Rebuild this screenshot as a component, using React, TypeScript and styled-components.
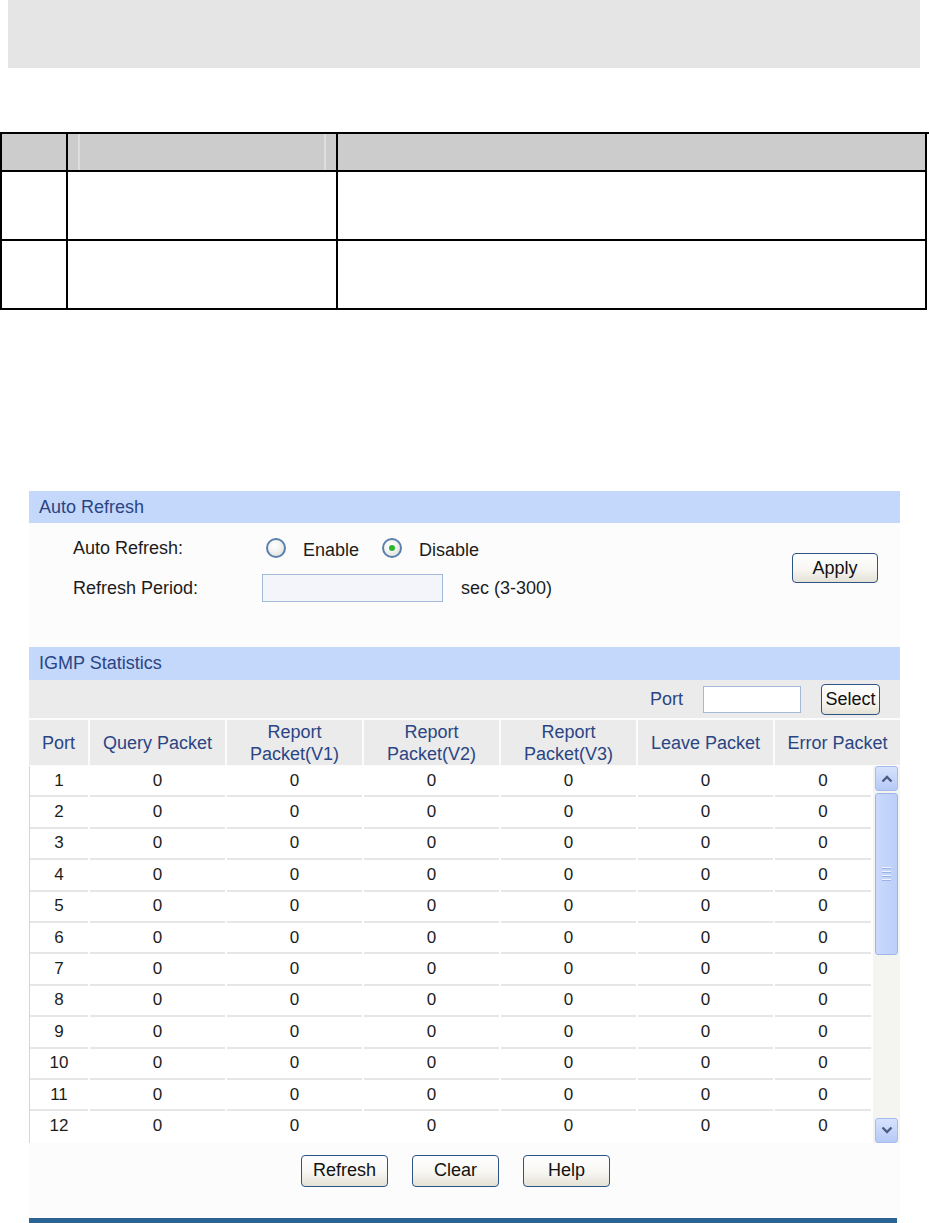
import styled, { createGlobalStyle } from "styled-components";

const GlobalStyle = createGlobalStyle`
  body {
    margin: 0;
    background: #ffffff;
    font-family: "Liberation Sans", Arial, sans-serif;
    overflow: hidden;
  }
`;

const Page = styled.div`
  width: 929px;
`;

const TopBox = styled.div`
  margin: 0 9px 0 8px;
  height: 68px;
  background: #e5e5e5;
`;

const DocGrid = styled.div`
  margin-top: 64px;
  display: grid;
  grid-template-columns: 66px 270px 589px;
  grid-template-rows: 38px 69px 69px;
  border-top: 2px solid #000;
  border-left: 2px solid #000;
`;

const DocCell = styled.div<{ $head?: boolean }>`
  border-right: 2px solid #000;
  border-bottom: 2px solid #000;
  background: ${(p) => (p.$head ? "#cccccc" : "#ffffff")};
  display: flex;
`;

const DocInner = styled.div`
  flex: 1;
  margin: 0 10px;
  border-left: 2px solid #dedede;
  border-right: 2px solid #dedede;
`;

const Panel = styled.div`
  margin: 181px 0 0 29px;
  width: 871px;
  background: #fcfcfc;
`;

const SectionHeader = styled.div<{ $h: number }>`
  height: ${(p) => p.$h}px;
  background: #c4d8fc;
  color: #2a4583;
  font-size: 18px;
  padding-left: 10px;
  display: flex;
  align-items: center;
`;

const RefreshBody = styled.div`
  height: 124px;
  display: flex;
  align-items: flex-start;
  justify-content: space-between;
  padding: 8px 22px 0 44px;
  box-sizing: border-box;
`;

const FormGrid = styled.div`
  display: grid;
  grid-template-columns: 189px auto;
  grid-auto-rows: 34px;
  row-gap: 6px;
  align-items: center;
  font-size: 18px;
  color: #1c1c1c;
`;

const FieldLine = styled.div`
  display: flex;
  align-items: center;
`;

const Radio = styled.span<{ $checked?: boolean }>`
  width: 20px;
  height: 20px;
  box-sizing: border-box;
  border-radius: 50%;
  border: 2px solid #5a80ad;
  background: radial-gradient(circle at 40% 35%, #ffffff 0%, #f2f2f0 45%, #d6d6d2 100%);
  display: flex;
  align-items: center;
  justify-content: center;
  margin: 0 17px 0 4px;

  &::after {
    content: "";
    display: ${(p) => (p.$checked ? "block" : "none")};
    width: 6px;
    height: 6px;
    border-radius: 50%;
    background: #29b52c;
  }
`;

const RadioText = styled.span`
  margin-right: 19px;
  padding-top: 4px;
`;

const TextBox = styled.div<{ $w: number; $h: number; $bg: string }>`
  width: ${(p) => p.$w}px;
  height: ${(p) => p.$h}px;
  box-sizing: border-box;
  border: 1.5px solid #a3b9d8;
  background: ${(p) => p.$bg};
`;

const Hint = styled.span`
  margin-left: 18px;
`;

const Btn = styled.button<{ $w: number; $h: number }>`
  width: ${(p) => p.$w}px;
  height: ${(p) => p.$h}px;
  border: 1.5px solid #2f5384;
  border-radius: 4px;
  background: linear-gradient(#ffffff 0%, #f7f6f2 55%, #e4e1d6 100%);
  font-family: "Liberation Sans", Arial, sans-serif;
  font-size: 18px;
  color: #111;
  padding: 0;
  cursor: pointer;
`;

const ApplyWrap = styled.div`
  padding-top: 22px;
`;

const Toolbar = styled.div`
  height: 38px;
  background: #ebebeb;
  display: flex;
  align-items: center;
  justify-content: flex-end;
  padding-right: 20px;
  gap: 20px;
  font-size: 18px;
  color: #2a4583;
`;

const HeadGrid = styled.div`
  margin-top: 2px;
  height: 45px;
  display: grid;
  grid-template-columns: 59px 135px 135px 135px 135px 135px 125px;
  column-gap: 2px;
`;

const HeadCell = styled.div`
  background: #ebebeb;
  color: #2a4583;
  font-size: 18px;
  line-height: 22px;
  white-space: pre-line;
  text-align: center;
  display: flex;
  align-items: center;
  justify-content: center;
`;

const DataArea = styled.div`
  margin-top: 1px;
  display: flex;
  background: #ffffff;
`;

const Rows = styled.div`
  width: 844px;
  border-left: 1px solid #d6d6d6;
`;

const Row = styled.div`
  display: grid;
  grid-template-columns: 58px 135px 135px 135px 135px 135px 96px;
  column-gap: 2px;
`;

const DataCell = styled.div<{ $last?: boolean }>`
  height: 31.4px;
  box-sizing: border-box;
  border-bottom: 2px solid ${(p) => (p.$last ? "transparent" : "#e6e6e6")};
  font-size: 17px;
  color: #1c1c1c;
  display: flex;
  align-items: center;
  justify-content: center;
`;

const ScrollBar = styled.div`
  width: 27px;
  padding: 0 2px;
  box-sizing: border-box;
  background: #f4f4f0;
  display: flex;
  flex-direction: column;
`;

const ScrollBtn = styled.div`
  height: 23px;
  border: 1px solid #a7bcee;
  border-radius: 3px;
  background: linear-gradient(#d6e2fd, #b6caf7);
  display: flex;
  align-items: center;
  justify-content: center;
`;

const Thumb = styled.div`
  margin-top: 2px;
  height: 160px;
  border: 1px solid #9fb5ea;
  border-radius: 3px;
  background: linear-gradient(90deg, #cad9fc, #bccff9);
  display: flex;
  align-items: center;
  justify-content: center;
`;

const Track = styled.div`
  flex: 1;
`;

const Grip = styled.div`
  width: 9px;
  display: flex;
  flex-direction: column;
  gap: 2px;

  span {
    height: 1px;
    background: #eef3fe;
    border-bottom: 1px solid #9bb2e4;
  }
`;

const ButtonRow = styled.div`
  display: flex;
  justify-content: center;
  gap: 24px;
  padding: 12px 18px 0 0;
  height: 75px;
  box-sizing: border-box;
`;

const BottomLine = styled.div`
  height: 5px;
  width: 868px;
  background: #2a6495;
`;

const Chevron = ({ up }: { up?: boolean }) => (
  <svg width="12" height="8" viewBox="0 0 12 8">
    <path
      d={up ? "M1.5 6.5 L6 2 L10.5 6.5" : "M1.5 1.5 L6 6 L10.5 1.5"}
      fill="none"
      stroke="#4a5d82"
      strokeWidth="2.4"
    />
  </svg>
);

const headers = [
  "Port",
  "Query Packet",
  "Report\nPacket(V1)",
  "Report\nPacket(V2)",
  "Report\nPacket(V3)",
  "Leave Packet",
  "Error Packet",
];

const ports = Array.from({ length: 12 }, (_, i) => i + 1);

const App = () => {
  return (
    <Page>
      <GlobalStyle />
      <TopBox />

      <DocGrid>
        <DocCell $head />
        <DocCell $head>
          <DocInner />
        </DocCell>
        <DocCell $head />
        <DocCell />
        <DocCell />
        <DocCell />
        <DocCell />
        <DocCell />
        <DocCell />
      </DocGrid>

      <Panel>
        <SectionHeader $h={32}>Auto Refresh</SectionHeader>
        <RefreshBody>
          <FormGrid>
            <span>Auto Refresh:</span>
            <FieldLine>
              <Radio />
              <RadioText>Enable</RadioText>
              <Radio $checked />
              <RadioText>Disable</RadioText>
            </FieldLine>
            <span>Refresh Period:</span>
            <FieldLine>
              <TextBox $w={181} $h={28} $bg="#f3f5fa" />
              <Hint>sec (3-300)</Hint>
            </FieldLine>
          </FormGrid>
          <ApplyWrap>
            <Btn $w={86} $h={30}>Apply</Btn>
          </ApplyWrap>
        </RefreshBody>

        <SectionHeader $h={33}>IGMP Statistics</SectionHeader>
        <Toolbar>
          <span>Port</span>
          <TextBox $w={98} $h={27} $bg="#ffffff" />
          <Btn $w={59} $h={31}>Select</Btn>
        </Toolbar>

        <HeadGrid>
          {headers.map((h) => (
            <HeadCell key={h}>{h}</HeadCell>
          ))}
        </HeadGrid>

        <DataArea>
          <Rows>
            {ports.map((port) => (
              <Row key={port}>
                <DataCell $last={port === 12}>{port}</DataCell>
                {Array.from({ length: 6 }, (_, i) => (
                  <DataCell key={i} $last={port === 12}>
                    0
                  </DataCell>
                ))}
              </Row>
            ))}
          </Rows>
          <ScrollBar>
            <ScrollBtn>
              <Chevron up />
            </ScrollBtn>
            <Thumb>
              <Grip>
                <span />
                <span />
                <span />
                <span />
              </Grip>
            </Thumb>
            <Track />
            <ScrollBtn>
              <Chevron />
            </ScrollBtn>
          </ScrollBar>
        </DataArea>

        <ButtonRow>
          <Btn $w={87} $h={32}>Refresh</Btn>
          <Btn $w={87} $h={32}>Clear</Btn>
          <Btn $w={87} $h={32}>Help</Btn>
        </ButtonRow>
        <BottomLine />
      </Panel>
    </Page>
  );
};

export default App;
